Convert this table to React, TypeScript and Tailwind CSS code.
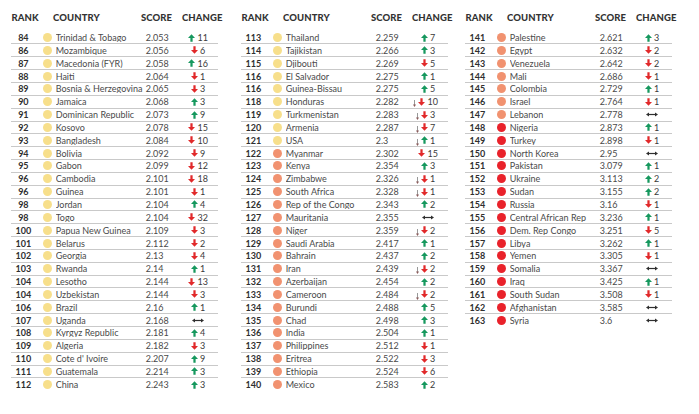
type Dir = 'up' | 'down' | 'same';
type Row = [string, string, string, Dir, string?, number?, boolean?];

// last two fields: dot colour (0 yellow, 1 orange, 2 red), small stray mark before the arrow
const col1: Row[] = [
    ['84', 'Trinidad & Tobago', '2.053', 'up', '11'],
    ['86', 'Mozambique', '2.056', 'down', '6'],
    ['87', 'Macedonia (FYR)', '2.058', 'up', '16'],
    ['88', 'Haiti', '2.064', 'down', '1'],
    ['89', 'Bosnia & Herzegovina', '2.065', 'down', '3'],
    ['90', 'Jamaica', '2.068', 'up', '3'],
    ['91', 'Dominican Republic', '2.073', 'up', '9'],
    ['92', 'Kosovo', '2.078', 'down', '15'],
    ['93', 'Bangladesh', '2.084', 'down', '10'],
    ['94', 'Bolivia', '2.092', 'down', '9'],
    ['95', 'Gabon', '2.099', 'down', '12'],
    ['96', 'Cambodia', '2.101', 'down', '18'],
    ['96', 'Guinea', '2.101', 'down', '1'],
    ['98', 'Jordan', '2.104', 'up', '4'],
    ['98', 'Togo', '2.104', 'down', '32'],
    ['100', 'Papua New Guinea', '2.109', 'down', '3'],
    ['101', 'Belarus', '2.112', 'down', '2'],
    ['102', 'Georgia', '2.13', 'down', '4'],
    ['103', 'Rwanda', '2.14', 'up', '1'],
    ['104', 'Lesotho', '2.144', 'down', '13'],
    ['104', 'Uzbekistan', '2.144', 'down', '3'],
    ['106', 'Brazil', '2.16', 'up', '1'],
    ['107', 'Uganda', '2.168', 'same'],
    ['108', 'Kyrgyz Republic', '2.181', 'up', '4'],
    ['109', 'Algeria', '2.182', 'down', '3'],
    ['110', "Cote d' Ivoire", '2.207', 'up', '9'],
    ['111', 'Guatemala', '2.214', 'up', '3'],
    ['112', 'China', '2.243', 'up', '3'],
];

const col2: Row[] = [
    ['113', 'Thailand', '2.259', 'up', '7'],
    ['114', 'Tajikistan', '2.266', 'up', '3'],
    ['115', 'Djibouti', '2.269', 'down', '5'],
    ['116', 'El Salvador', '2.275', 'up', '1'],
    ['116', 'Guinea-Bissau', '2.275', 'up', '5'],
    ['118', 'Honduras', '2.282', 'down', '10', 0, true],
    ['119', 'Turkmenistan', '2.283', 'down', '3', 0, true],
    ['120', 'Armenia', '2.287', 'down', '7', 0, true],
    ['121', 'USA', '2.3', 'up', '1', 0, true],
    ['122', 'Myanmar', '2.302', 'down', '15', 1],
    ['123', 'Kenya', '2.354', 'up', '3', 1],
    ['124', 'Zimbabwe', '2.326', 'down', '1', 1, true],
    ['125', 'South Africa', '2.328', 'down', '1', 1, true],
    ['126', 'Rep of the Congo', '2.343', 'up', '2', 1],
    ['127', 'Mauritania', '2.355', 'same', '', 1],
    ['128', 'Niger', '2.359', 'down', '2', 1, true],
    ['129', 'Saudi Arabia', '2.417', 'up', '1', 1],
    ['130', 'Bahrain', '2.437', 'up', '2', 1],
    ['131', 'Iran', '2.439', 'down', '2', 1, true],
    ['132', 'Azerbaijan', '2.454', 'up', '2', 1],
    ['133', 'Cameroon', '2.484', 'down', '2', 1, true],
    ['134', 'Burundi', '2.488', 'up', '5', 1],
    ['135', 'Chad', '2.498', 'up', '3', 1],
    ['136', 'India', '2.504', 'up', '1', 1],
    ['137', 'Philippines', '2.512', 'down', '1', 1],
    ['138', 'Eritrea', '2.522', 'down', '3', 1],
    ['139', 'Ethiopia', '2.524', 'down', '6', 1],
    ['140', 'Mexico', '2.583', 'up', '2', 1],
];

const col3: Row[] = [
    ['141', 'Palestine', '2.621', 'up', '3', 1],
    ['142', 'Egypt', '2.632', 'down', '2', 1],
    ['143', 'Venezuela', '2.642', 'down', '2', 1],
    ['144', 'Mali', '2.686', 'down', '1', 1],
    ['145', 'Colombia', '2.729', 'up', '1', 1],
    ['146', 'Israel', '2.764', 'down', '1', 1],
    ['147', 'Lebanon', '2.778', 'same', '', 1],
    ['148', 'Nigeria', '2.873', 'up', '1', 2],
    ['149', 'Turkey', '2.898', 'down', '1', 2],
    ['150', 'North Korea', '2.95', 'same', '', 2],
    ['151', 'Pakistan', '3.079', 'up', '1', 2],
    ['152', 'Ukraine', '3.113', 'up', '2', 2],
    ['153', 'Sudan', '3.155', 'up', '2', 2],
    ['154', 'Russia', '3.16', 'down', '1', 2],
    ['155', 'Central African Rep', '3.236', 'up', '1', 2],
    ['156', 'Dem. Rep Congo', '3.251', 'down', '5', 2],
    ['157', 'Libya', '3.262', 'up', '1', 2],
    ['158', 'Yemen', '3.305', 'down', '1', 2],
    ['159', 'Somalia', '3.367', 'same', '', 2],
    ['160', 'Iraq', '3.425', 'up', '1', 2],
    ['161', 'South Sudan', '3.508', 'down', '1', 2],
    ['162', 'Afghanistan', '3.585', 'same', '', 2],
    ['163', 'Syria', '3.6', 'same', '', 2],
];

const dotColors = ['bg-[#f7df8b]', 'bg-[#f19270]', 'bg-[#e9222b]'];

function Arrow({ dir }: { dir: 'up' | 'down' }) {
    return (
        <svg
            width="7"
            height="8"
            viewBox="0 0 10 11"
            className={dir === 'down' ? 'rotate-180' : ''}
        >
            <path
                d="M5 0 L10 5.6 H6.6 V11 H3.4 V5.6 H0 Z"
                fill={dir === 'up' ? '#16985e' : '#e1292a'}
            />
        </svg>
    );
}

function Same() {
    return (
        <svg width="12" height="5" viewBox="0 0 12 5">
            <path d="M2.5 2.5 H9.5" stroke="#2f2f2f" strokeWidth="1.2" />
            <path d="M0 2.5 L3 0.4 V4.6 Z M12 2.5 L9 0.4 V4.6 Z" fill="#2f2f2f" />
        </svg>
    );
}

function Mark() {
    return (
        <svg width="3" height="7" viewBox="0 0 3 7" className="absolute -left-[5px] top-[3px]">
            <path d="M1.5 0 V6" stroke="#6b6b6b" strokeWidth="0.7" />
            <path d="M0 4.6 L1.5 7 L3 4.6 Z" fill="#8a5a5a" />
        </svg>
    );
}

function Column({ rows }: { rows: Row[] }) {
    return (
        <div className="w-[212px] shrink-0">
            <div className="flex h-[31.6px] items-start pt-[12px] text-[9.5px] leading-[12px] font-black tracking-[0.1px] text-[#333]">
                <div className="w-[28px] text-center">RANK</div>
                <div className="ml-[14px] w-[88px]">COUNTRY</div>
                <div className="w-[41px]">SCORE</div>
                <div>CHANGE</div>
            </div>
            {rows.map(([rank, name, score, dir, num, dot = 0, mark], i) => (
                <div
                    key={rank + name}
                    className={clsxRow(i === rows.length - 1)}
                >
                    <div className="w-[25px] text-center font-bold text-[#2f2f2f]">{rank}</div>
                    <div className={`ml-[7px] h-[9px] w-[9px] rounded-full ${dotColors[dot]}`} />
                    <div className="ml-[4px] w-[91px] truncate text-[#4a4a4a]">{name}</div>
                    <div className="w-[33px] text-[#4a4a4a]">{score}</div>
                    <div className="flex w-[40px] justify-center">
                        {dir === 'same' ? (
                            <Same />
                        ) : (
                            <div className="relative flex items-center gap-[2px] text-[#3a3a3a]">
                                {mark && <Mark />}
                                <Arrow dir={dir} />
                                <span>{num}</span>
                            </div>
                        )}
                    </div>
                </div>
            ))}
        </div>
    );
}

function clsxRow(last: boolean) {
    return last
        ? 'flex h-[12.85px] w-[207px] items-center text-[9px] leading-none'
        : 'flex h-[12.85px] w-[207px] items-center border-b border-[#c9c9c9] text-[9px] leading-none';
}

export default function App() {
    return (
        <div
            className="flex h-[414px] w-[699px] overflow-hidden bg-white pl-[11px]"
            style={{ fontFamily: 'Lato, "Open Sans", sans-serif' }}
        >
            <Column rows={col1} />
            <div className="ml-[18px]">
                <Column rows={col2} />
            </div>
            <div className="ml-[12px]">
                <Column rows={col3} />
            </div>
        </div>
    );
}
